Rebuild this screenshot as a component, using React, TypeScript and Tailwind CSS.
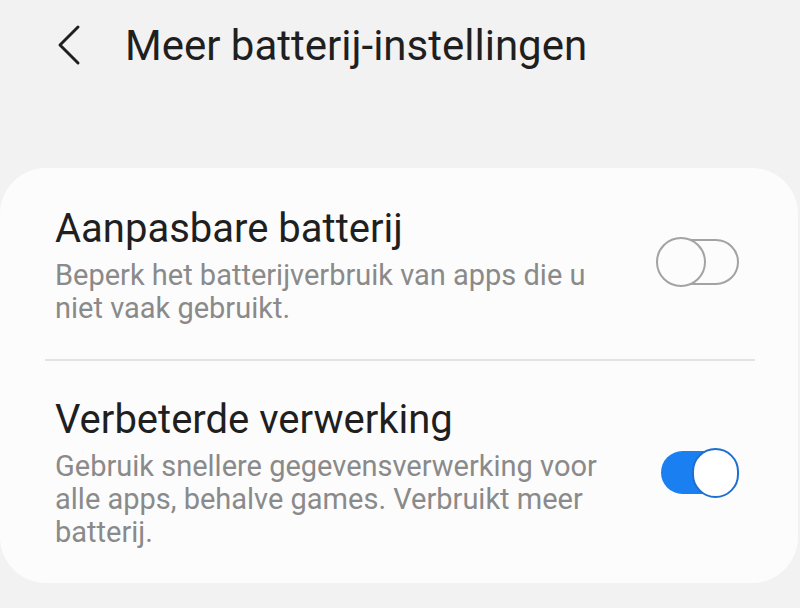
import React from "react";

function Toggle({ on }: { on: boolean }) {
  if (on) {
    return (
      <div className="relative h-[50px] w-[80px] shrink-0">
        <div className="absolute left-[1px] top-[3px] h-[43px] w-[74px] rounded-full bg-[#1a7ff0]" />
        <div className="absolute left-[32px] top-0 h-[50px] w-[47px] rounded-full border-2 border-[#1d6fd0] bg-white" />
      </div>
    );
  }
  return (
    <div className="relative mt-[-7px] h-[50px] w-[84px] shrink-0">
      <div className="absolute left-[1px] top-[2px] h-[46px] w-[82px] rounded-full border-2 border-[#a3a3a3]" />
      <div className="absolute left-0 top-0 h-[50px] w-[50px] rounded-full border-2 border-[#a3a3a3] bg-[#fcfcfc]" />
    </div>
  );
}

function SettingRow({
  title,
  lines,
  on,
}: {
  title: string;
  lines: string[];
  on: boolean;
}) {
  return (
    <div className="flex items-center justify-between pl-[55px] pr-[58px]">
      <div className="flex flex-col whitespace-nowrap">
        <div className="text-[40px] leading-[46px] text-[#1f1f1f]">{title}</div>
        <div className="mt-[7px] text-[29px] leading-[33px] text-[#8a8a8a]">
          {lines.map((l) => (
            <div key={l}>{l}</div>
          ))}
        </div>
      </div>
      <Toggle on={on} />
    </div>
  );
}

export default function App() {
  return (
    <div
      className="h-[608px] w-[800px] overflow-hidden bg-[#f2f2f2]"
      style={{ fontFamily: "Roboto, 'Noto Sans', sans-serif" }}
    >
      <div className="flex h-[92px] items-center">
        <svg
          className="ml-[56px] mt-[-2px]"
          width="26"
          height="42"
          viewBox="0 0 26 42"
          fill="none"
          stroke="#1f1f1f"
          strokeWidth="3"
          strokeLinecap="round"
          strokeLinejoin="round"
        >
          <path d="M22 3 L4 21 L22 39" />
        </svg>
        <div className="ml-[43px] whitespace-nowrap text-[42px] leading-[48px] text-[#1f1f1f]">
          Meer batterij-instellingen
        </div>
      </div>
      <div className="mt-[76px] mr-[2px] rounded-[46px] bg-[#fcfcfc] pt-[38px] pb-[34px]">
        <SettingRow
          title="Aanpasbare batterij"
          lines={["Beperk het batterijverbruik van apps die u", "niet vaak gebruikt."]}
          on={false}
        />
        <div className="ml-[45px] mr-[43px] mt-[34px] mb-[36px] h-[2px] bg-[#e3e3e3]" />
        <SettingRow
          title="Verbeterde verwerking"
          lines={[
            "Gebruik snellere gegevensverwerking voor",
            "alle apps, behalve games. Verbruikt meer",
            "batterij.",
          ]}
          on={true}
        />
      </div>
    </div>
  );
}
